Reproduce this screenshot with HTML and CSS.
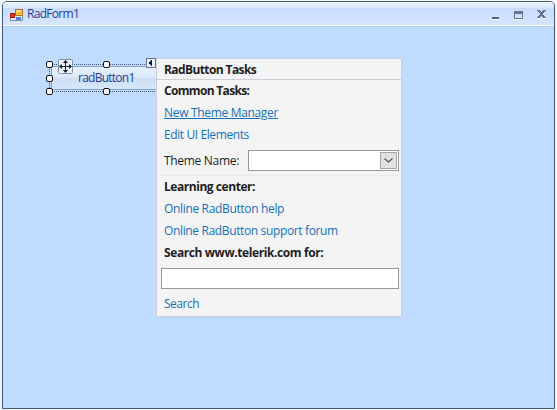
FILE: index.html
```html
<!DOCTYPE html>
<html lang="en">
<head>
<meta charset="utf-8">
<title>RadForm1</title>
<link rel="stylesheet" href="styles.css">
</head>
<body>
<div class="window">
  <header class="titlebar">
    <svg class="app-icon" width="13" height="12" viewBox="0 0 13 12" shape-rendering="crispEdges">
      <path d="M.5 4.500h5v-4h7v11h-12z" fill="#e8eaf0" stroke="#8b8f9c"/>
      <rect x="5.500" y=".5" width="7" height="6" fill="#f8bd2e" stroke="#a87822"/>
      <rect x="6" y="1" width="5" height="2" fill="#ffe08a"/>
      <rect x=".5" y="4.500" width="4" height="4" fill="#dc3522" stroke="#a51c16"/>
      <rect x="6" y="8" width="5" height="3" fill="#4f83dc"/>
    </svg>
    <h1 class="title">RadForm1</h1>
    <svg class="controls" width="56" height="12" viewBox="0 0 56 12" shape-rendering="crispEdges">
      <path d="M1 8h7v2H1z" fill="#56637b"/><path d="M1 10h7v1H1z" fill="#fff"/>
      <path d="M23 2h9v8h-9zM24 5v4h7V5z" fill="#66758f" fill-rule="evenodd"/><path d="M23 10h9v1h-9z" fill="#fff"/>
      <path d="M46 1h3v1h1v1h1V2h1V1h3v1h-1v1h-1v1h-1v2h1v1h1v1h1v1h-3V8h-1V7h-1v1h-1v1h-3V8h1V7h1V6h1V4h-1V3h-1V2h-1z" fill="#66718a"/>
      <path d="M46 9h3v1h-3zM52 9h3v1h-3z" fill="#fff"/>
    </svg>
  </header>
  <main class="canvas">
    <div class="selection">
      <div class="rad-button"><span class="caption">radButton1</span></div>
      <i class="handle nw"></i><i class="handle n"></i><i class="handle w"></i><i class="handle sw"></i><i class="handle s"></i>
      <svg class="move" width="15" height="15" viewBox="0 0 15 15">
        <rect x=".5" y=".5" width="14" height="14" rx="1" fill="#edf2fb" stroke="#8190ad"/>
        <path d="M7.500 2v11M2 7.500h11" stroke="#111d33"/>
        <path d="M7.500 1l2.600 3H4.900zM7.500 14l2.600-3H4.900zM1 7.500l3-2.600v5.200zM14 7.500l-3-2.600v5.200z" fill="#111d33"/>
      </svg>
      <svg class="tag" width="10" height="10" viewBox="0 0 10 10" shape-rendering="crispEdges">
        <rect x=".5" y=".5" width="9" height="9" fill="#e8f0fc" stroke="#627594"/>
        <path d="M6 2v6H5V7H4V6H3V4h1V3h1V2z" fill="#101725"/>
      </svg>
    </div>
    <section class="tasks">
      <h2 class="head"><span class="t-head">RadButton Tasks</span></h2>
      <h3 class="row"><span class="t-common">Common Tasks:</span></h3>
      <a class="row link"><span class="t-new">New Theme Manager</span></a>
      <a class="row link"><span class="t-edit">Edit UI Elements</span></a>
      <div class="row theme">
        <label class="t-theme">Theme Name:</label>
        <div class="combo"><span class="drop"><svg width="9" height="5" viewBox="0 0 9 5"><path d="M.5.5l4 3.500 4-3.500" fill="none" stroke="#555" stroke-width="1.200"/></svg></span></div>
      </div>
      <h3 class="row"><span class="t-learn">Learning center:</span></h3>
      <a class="row link"><span class="t-help">Online RadButton help</span></a>
      <a class="row link"><span class="t-forum">Online RadButton support forum</span></a>
      <h3 class="row"><span class="t-www">Search www.telerik.com for:</span></h3>
      <div class="field"></div>
      <a class="row link"><span class="t-search">Search</span></a>
    </section>
  </main>
</div>
</body>
</html>
```

FILE: styles.css
```css
* { box-sizing: border-box; }
body {
  margin: 0;
  width: 557px;
  height: 410px;
  overflow: hidden;
  background: #f5f5f5;
  font: 12px/22px "Open Sans", "Noto Sans", sans-serif;
  color: #1e1e1e;
}
h1, h2, h3 { margin: 0; font-size: 12px; }
.window {
  width: 553px;
  height: 408px;
  margin: 1px 0 0 2px;
  border: 1px solid #3b5a82;
  border-radius: 5px 5px 0 0;
  background: #bfdbff;
  overflow: hidden;
}
.titlebar {
  display: flex;
  align-items: center;
  height: 25px;
  padding: 0 7px;
  border-bottom: 1px solid #b0cff7;
  background: linear-gradient(#fff 0 1px, #e4eefb 1px, #dceafd 6px, #c9dcff 6px, #d7e5ff 23px, #fff 23px);
}
.title { margin-left: 4px; font-weight: 400; color: #1d3f91; letter-spacing: -.7px; }
.app-icon { margin-top: 2px; }
.controls { margin-left: auto; margin-top: 2px; }
.canvas { position: relative; height: 381px; }
.selection {
  position: absolute;
  left: 46px;
  top: 37px;
  width: 108px;
  height: 28px;
  border: 1px dotted #3f5675;
  border-right: 0;
  padding: 1px 0 1px 1px;
}
.rad-button {
  height: 24px;
  border: 1px solid #86a5cd;
  border-right: 0;
  background: linear-gradient(#e5effc, #dce9fa 50%, #cbdef5 50%, #d8e7fa);
  padding-left: 26px;
  line-height: 21px;
  color: #1d3f91;
}
.caption { letter-spacing: -.75px; }
.handle {
  position: absolute;
  width: 7px;
  height: 7px;
  border: 1px solid #111;
  border-radius: 2px;
  background: #fff;
}
.nw { left: -4px; top: -4px; }
.n { left: 53px; top: -4px; }
.w { left: -4px; top: 10px; }
.sw { left: -4px; top: 23px; }
.s { left: 53px; top: 23px; }
.move { position: absolute; left: 8px; top: -6px; }
.tag { position: absolute; left: 96px; top: -7px; }
.tasks {
  position: absolute;
  left: 153px;
  top: 31px;
  width: 246px;
  height: 259px;
  border: 1px solid #ccced9;
  background: #f4f4f4;
}
.head { height: 21px; line-height: 21px; padding-left: 7px; border-bottom: 1px solid #ccced9; }
.row { display: block; height: 22px; padding-left: 7px; white-space: nowrap; }
.link { color: #1570c0; }
.t-new { text-decoration: underline; text-underline-offset: 1px; }
.theme {
  display: flex;
  align-items: center;
  height: 30px;
  margin: 0 3px 0 2px;
  padding: 0 0 0 5px;
  border-bottom: 1px solid #eaeaee;
}
.combo {
  display: flex;
  justify-content: flex-end;
  width: 151px;
  height: 21px;
  margin-left: auto;
  margin-right: -1px;
  padding: 1px;
  border: 1px solid #999;
  background: #fff;
}
.drop {
  display: flex;
  align-items: center;
  justify-content: center;
  width: 17px;
  height: 17px;
  border: 1px solid #a5a5a5;
  background: #e1e1e1;
}
.field { height: 21px; margin: 4px 2px 4px 4px; border: 1px solid #999; background: #fff; }
.t-head { letter-spacing: -.6px; }
.t-common { letter-spacing: -.68px; }
.t-learn { letter-spacing: -.45px; }
.t-www { letter-spacing: -.41px; }
.t-new { letter-spacing: -.32px; }
.t-edit { letter-spacing: -.4px; }
.t-theme { letter-spacing: -.3px; }
.t-help { letter-spacing: -.34px; }
.t-forum { letter-spacing: -.36px; }
.t-search { letter-spacing: -.5px; }
```
